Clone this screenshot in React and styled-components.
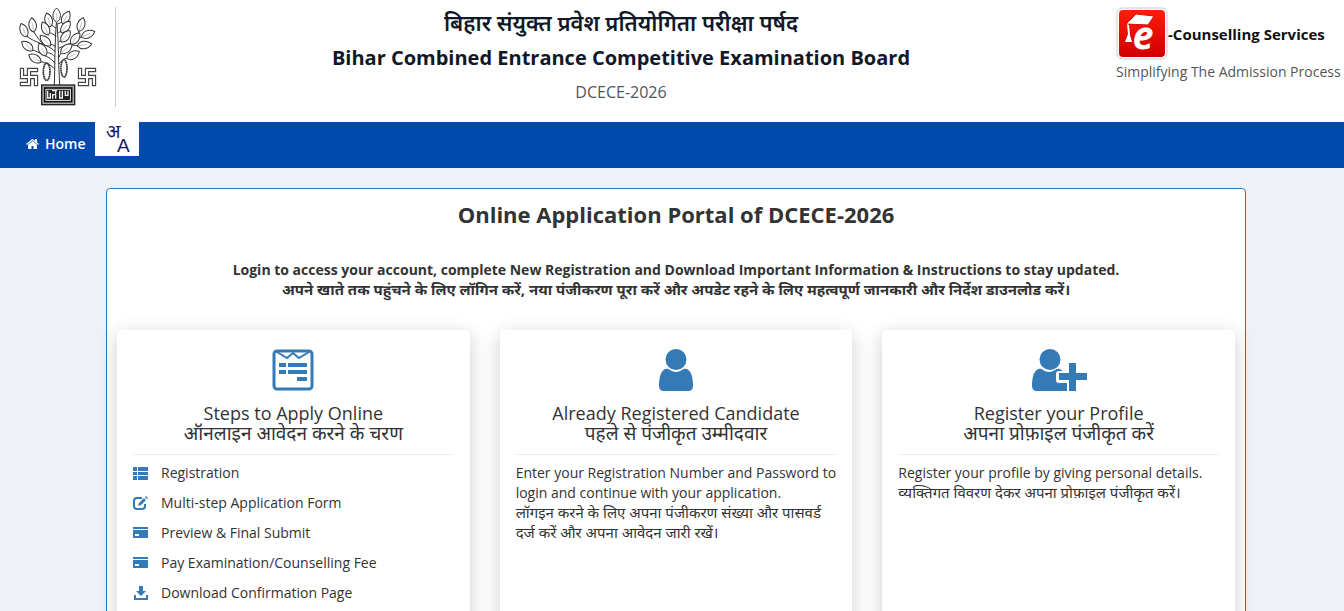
import React from "react";
import styled, { createGlobalStyle } from "styled-components";

const GlobalStyle = createGlobalStyle`
  * {
    box-sizing: border-box;
  }
  body {
    margin: 0;
    background: #eff1f6;
    color: #333;
    font-family: "Open Sans", "Noto Sans", sans-serif;
    font-size: 14px;
    line-height: 20px;
  }
`;

const Header = styled.header`
  display: flex;
  align-items: flex-start;
  height: 122px;
  background: white;
  padding: 7px 0 0;
`;

const EmblemBox = styled.div`
  flex: none;
  width: 116px;
  height: 100px;
  margin-right: 10px;
  padding-left: 10px;
  border-right: 1px solid #ccc;

  svg {
    display: block;
  }
`;

const Titles = styled.div`
  flex: 1;
  text-align: center;
`;

const BoardName = styled.h1`
  margin: 0 0 6px;
  color: #111827;
  font-size: 20px;
  font-weight: 700;
  line-height: 30px;
`;

const HindiBoardName = styled(BoardName)`
  font-size: 22px;
  font-weight: 600;
`;

const ExamName = styled.p`
  margin: 0;
  color: #4b5563;
  font-size: 16px;
  font-weight: 500;
  line-height: 26px;
`;

// Devanagari runs a little larger than the Latin text beside it
const Hindi = styled.span`
  font-size: ${(props) => props.$size || 15}px;
  font-weight: ${(props) => props.$weight || 400};
  line-height: 1;
`;

const Brand = styled.div`
  flex: none;
  width: 228px;
`;

const BrandTop = styled.div`
  display: flex;
  align-items: center;
  color: #111;
  font-size: 15px;
  font-weight: 700;
`;

const Tagline = styled.div`
  color: #555;
  font-size: 14px;
  font-weight: 500;
  line-height: 22px;
  white-space: nowrap;
`;

const Nav = styled.nav`
  display: flex;
  align-items: flex-start;
  height: 46px;
  padding-left: 26px;
  background: #004aad;
`;

const NavLink = styled.a`
  display: flex;
  align-items: center;
  gap: 6px;
  height: 44px;
  margin-right: 9px;
  color: white;
  font-weight: 600;
  text-decoration: none;
`;

const LanguageButton = styled.button`
  width: 44px;
  height: 34px;
  padding: 0;
  border: none;
  background: white;

  svg {
    display: block;
  }
`;

const Main = styled.main`
  padding: 20px 0 20px 8px;
`;

const Portal = styled.section`
  max-width: 1140px;
  margin: 0 auto;
  padding: 10px;
  border: 1px solid #337ab7;
  border-radius: 4px;
  background: white;
`;

const PortalTitle = styled.h2`
  margin: 0 0 31px;
  font-size: 22px;
  font-weight: 700;
  line-height: 30px;
  text-align: center;
`;

const Intro = styled.p`
  margin: 0 0 30px;
  font-weight: 700;
  text-align: center;
`;

const Cards = styled.div`
  display: grid;
  grid-template-columns: repeat(3, 1fr);
  gap: 30px;
`;

const Card = styled.article`
  min-height: 320px;
  padding: 16px;
  border-radius: 4px;
  background: white;
  box-shadow: 0 5px 20px rgba(0, 0, 0, 0.2);
`;

const CardIcon = styled.div`
  display: flex;
  justify-content: center;
  height: 57px;
  padding-top: 3px;
  color: #337ab7;
`;

const CardTitle = styled.h3`
  margin: 0 0 8px;
  padding-bottom: 11px;
  border-bottom: 1px solid #eee;
  font-size: 18px;
  font-weight: 400;
  line-height: 20px;
  text-align: center;
`;

const CardText = styled.p`
  margin: 0;
`;

const Steps = styled.ul`
  display: grid;
  gap: 10px;
  margin: 0;
  padding: 0;
  list-style: none;
`;

const Step = styled.li`
  display: flex;
  align-items: center;
  gap: 13px;

  svg {
    color: #337ab7;
  }
`;

// x, y, rotation of every leaf on the tree
const leaves = [
  [140, 47, 0], [116, 61, -15], [167, 54, 28], [107, 87, -25], [166, 82, 38],
  [107, 123, -45], [166, 110, 38], [68, 76, -8], [42, 92, -22], [53, 139, -50],
  [98, 150, -28], [76, 176, -58], [213, 75, 18], [233, 103, 68], [195, 117, 38],
  [222, 135, 82], [168, 147, 52], [188, 166, 60],
];

const knotPath = "M-21-21V0H21V21M-21 21H0V-21H21";

function Emblem() {
  return (
    <svg width="100" height="110" viewBox="0 21 300 330" fill="none" stroke="#333" strokeWidth="3">
      <path d="M133 255C135 190 134 130 139 68M149 255C145 190 146 130 141 68" />
      <path d="M135 208C120 190 100 188 90 183M135 190C120 168 85 158 65 148M134 170C125 160 115 155 104 161M136 155C110 130 75 130 50 108M104 135C90 125 80 110 71 94M138 140C130 135 125 132 116 133M138 110C130 100 120 98 112 98M138 85L121 72M147 192C155 180 165 174 176 173M147 172C150 162 155 158 160 154M146 145C165 135 180 132 206 138M170 135C190 128 205 115 218 108M180 128C195 118 205 105 209 90M146 125L158 120M145 98L157 92M143 72L160 65" />
      {leaves.map(([x, y, angle]) => (
        <g key={`${x}-${y}`} transform={`translate(${x} ${y}) rotate(${angle})`}>
          <path fill="#fff" d="M0-23C15-10 15 11 0 20C-15 11-15-10 0-23Z" />
          <path stroke="#aaa" strokeWidth="2" d="M0-8V16" />
        </g>
      ))}
      <g strokeWidth="5" strokeDasharray="5 1">
        <ellipse cx="110" cy="215" rx="10" ry="26" />
        <ellipse cx="162" cy="205" rx="9" ry="26" />
      </g>
      {[57, 231].map((x) => (
        <g key={x} transform={`translate(${x} 231)`} strokeLinecap="square">
          <path d={knotPath} stroke="#444" strokeWidth="13" />
          <path d={knotPath} stroke="#fff" strokeWidth="6" />
        </g>
      ))}
      <rect x="95" y="255" width="99" height="59" fill="#aaa" stroke="#222" strokeWidth="4" />
      <rect x="104" y="264" width="81" height="41" fill="#fff" stroke="#111" strokeWidth="5" />
      <rect x="109" y="269" width="71" height="31" fill="#222" stroke="none" />
      <path stroke="#eee" strokeWidth="4" d="M113 272V294H121V279M128 296V284H137V296M137 272V284M126 272H141M149 272V294H157V272M166 272V286H174V272" />
    </svg>
  );
}

function BrandMark() {
  return (
    <svg width="52" height="54" viewBox="0 0 52 54">
      <defs>
        <linearGradient id="brandRed" x1="0" y1="0" x2="0" y2="1">
          <stop offset="0" stopColor="#ff1d0a" />
          <stop offset="1" stopColor="#cf0000" />
        </linearGradient>
      </defs>
      <rect x="1" y="1" width="50" height="51" rx="5" fill="#fff" stroke="#ccc" />
      <rect x="3" y="3" width="46" height="47" rx="4" fill="url(#brandRed)" />
      <text x="17" y="42" fill="#fff" stroke="#fff" fontFamily="Open Sans" fontSize="38" fontStyle="italic" fontWeight="600">e</text>
      <path fill="#fff" stroke="#d90b04" strokeWidth="1" d="M20 7L38 9L32 18L10 17Z" />
      <path fill="#fff" d="M11 17L13 18L14 28L16 35L9 35L12 27Z" />
    </svg>
  );
}

function HomeIcon() {
  return (
    <svg width="13" height="14" viewBox="64 0 1664 1792" fill="currentColor">
      <path d="M1472 992v480q0 26-19 45t-45 19h-384v-384h-256v384h-384q-26 0-45-19t-19-45v-480q0-1 .5-3t.5-3l575-474 575 474q1 2 1 6zm223-69l-62 74q-8 9-21 11h-3q-13 0-21-7l-692-577-692 577q-12 8-24 7-13-2-21-11l-62-74q-8-10-7-23.5t11-21.5l719-599q32-26 76-26t76 26l244 204v-195q0-14 9-23t23-9h192q14 0 23 9t9 23v408l219 182q10 8 11 21.5t-7 23.5z" />
    </svg>
  );
}

function LanguageIcon() {
  return (
    <svg width="44" height="34" viewBox="0 0 44 34" fill="#1e1464" fontFamily="Open Sans, Noto Sans, sans-serif">
      <text x="11" y="16" fontSize="19">अ</text>
      <text x="22" y="30" fontSize="19" fontFamily="Liberation Sans">A</text>
    </svg>
  );
}

function FormIcon() {
  return (
    <svg width="42" height="42" viewBox="0 0 42 42" fill="none" stroke="currentColor">
      <rect x="2" y="2" width="38" height="38" rx="3" strokeWidth="3" />
      <path strokeWidth="2" d="M5 3L15 9L21 4L27 9L37 3" />
      <path strokeWidth="4" d="M7 16H14M16 16H35M7 23H14M16 23H35M25 30H35" />
    </svg>
  );
}

const bodyPath = "M7 20Q10 19 12 21Q18 25 24 21Q26 19 29 20Q34 22 35 34V37Q35 42 30 42H6Q1 42 1 37V34Q2 22 7 20Z";

function UserIcon() {
  return (
    <svg width="36" height="42" viewBox="0 0 36 42" fill="currentColor">
      <circle cx="18" cy="10.5" r="10.5" />
      <path d={bodyPath} />
    </svg>
  );
}

function UserPlusIcon() {
  return (
    <svg width="56" height="42" viewBox="0 0 56 42" fill="currentColor">
      <circle cx="19" cy="10.5" r="10.5" />
      <path d={bodyPath} />
      <path fill="#fff" d="M25 25Q25 22 28 22H37V13H47V22H56V34H47V42H37V34H28Q25 34 25 31Z" />
      <path d="M30 34H36V42H30ZM28 24H38V14H45V24H56V31H45V42H38V31H28Z" />
    </svg>
  );
}

const stepIcons = {
  list: <path d="M0 1H4V5H0ZM5 1H15V5H5ZM0 6H4V9H0ZM5 6H15V9H5ZM0 10H4V14H0ZM5 10H15V14H5Z" />,
  edit: (
    <>
      <path fill="none" stroke="currentColor" strokeWidth="2" d="M9 2H4Q1 2 1 5V10Q1 13 4 13H9Q12 13 12 10V8" />
      <path d="M5 10L6 7L11 2L13 4L8 9ZM12 1L13 0L15 2L14 3Z" />
    </>
  ),
  card: <path fillRule="evenodd" d="M0 1H15V3H0ZM0 4H15V12H0ZM2 8V10H6V8Z" />,
  download: <path d="M6 0H10V5H13L8 10L3 5H6ZM1 9H3V12H13V9H15V14H1Z" />,
};

const steps = [
  { icon: "list", label: "Registration" },
  { icon: "edit", label: "Multi-step Application Form" },
  { icon: "card", label: "Preview & Final Submit" },
  { icon: "card", label: "Pay Examination/Counselling Fee" },
  { icon: "download", label: "Download Confirmation Page" },
];

export default function App() {
  return (
    <>
      <GlobalStyle />
      <Header>
        <EmblemBox>
          <Emblem />
        </EmblemBox>
        <Titles>
          <HindiBoardName as="div">बिहार संयुक्त प्रवेश प्रतियोगिता परीक्षा पर्षद</HindiBoardName>
          <BoardName>Bihar Combined Entrance Competitive Examination Board</BoardName>
          <ExamName>DCECE-2026</ExamName>
        </Titles>
        <Brand>
          <BrandTop>
            <BrandMark />
            <span>-Counselling Services</span>
          </BrandTop>
          <Tagline>Simplifying The Admission Process</Tagline>
        </Brand>
      </Header>
      <Nav>
        <NavLink href="#home">
          <HomeIcon />
          Home
        </NavLink>
        <LanguageButton type="button" aria-label="Change language">
          <LanguageIcon />
        </LanguageButton>
      </Nav>
      <Main>
        <Portal>
          <PortalTitle>Online Application Portal of DCECE-2026</PortalTitle>
          <Intro>
            Login to access your account, complete New Registration and Download Important Information &amp; Instructions to stay updated.
            <br />
            <Hindi $weight={700}>
              अपने खाते तक पहुंचने के लिए लॉगिन करें, नया पंजीकरण पूरा करें और अपडेट रहने के लिए महत्वपूर्ण जानकारी और निर्देश डाउनलोड करें।
            </Hindi>
          </Intro>
          <Cards>
            <Card>
              <CardIcon>
                <FormIcon />
              </CardIcon>
              <CardTitle>
                Steps to Apply Online
                <br />
                <Hindi $size={19}>ऑनलाइन आवेदन करने के चरण</Hindi>
              </CardTitle>
              <Steps>
                {steps.map((step) => (
                  <Step key={step.label}>
                    <svg width="15" height="15" viewBox="0 0 15 15" fill="currentColor">
                      {stepIcons[step.icon]}
                    </svg>
                    {step.label}
                  </Step>
                ))}
              </Steps>
            </Card>
            <Card>
              <CardIcon>
                <UserIcon />
              </CardIcon>
              <CardTitle>
                Already Registered Candidate
                <br />
                <Hindi $size={19}>पहले से पंजीकृत उम्मीदवार</Hindi>
              </CardTitle>
              <CardText>
                Enter your Registration Number and Password to login and continue with your application.
                <br />
                <Hindi>लॉगइन करने के लिए अपना पंजीकरण संख्या और पासवर्ड दर्ज करें और अपना आवेदन जारी रखें।</Hindi>
              </CardText>
            </Card>
            <Card>
              <CardIcon>
                <UserPlusIcon />
              </CardIcon>
              <CardTitle>
                Register your Profile
                <br />
                <Hindi $size={19}>अपना प्रोफ़ाइल पंजीकृत करें</Hindi>
              </CardTitle>
              <CardText>
                Register your profile by giving personal details.
                <br />
                <Hindi>व्यक्तिगत विवरण देकर अपना प्रोफ़ाइल पंजीकृत करें।</Hindi>
              </CardText>
            </Card>
          </Cards>
        </Portal>
      </Main>
    </>
  );
}
